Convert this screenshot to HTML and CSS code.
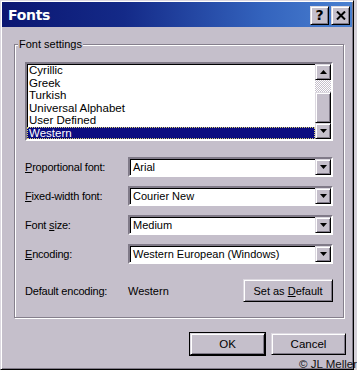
FILE: index.html
```html
<!DOCTYPE html>
<html lang="en">
<head>
  <meta charset="UTF-8" />
  <meta name="viewport" content="width=device-width, initial-scale=1.0"/>
  <title>Fonts</title>
  <link rel="stylesheet" href="styles.css">
</head>
<body>

  <div class="page">
    <div class="window">
      <div class="titlebar">
        <span class="title">Fonts</span>
        <div class="title-buttons">
          <button class="tbtn help">?</button>
          <button class="tbtn">
            <svg width="10" height="9" viewBox="0 0 10 9"><path d="M1 0.5 L9 8.5 M9 0.5 L1 8.5" stroke="#000" stroke-width="2"/></svg>
          </button>
        </div>
      </div>

      <div class="content">
        <div class="group">
          <span class="group-label">Font settings</span>

          <div class="listbox">
            <ul class="items">
              <li>Cyrillic</li>
              <li>Greek</li>
              <li>Turkish</li>
              <li>Universal Alphabet</li>
              <li>User Defined</li>
              <li class="selected">Western</li>
            </ul>
            <div class="scrollbar">
              <div class="sb-btn raised">
                <svg width="7" height="4" viewBox="0 0 7 4"><path d="M3.5 0 L7 4 L0 4 Z" fill="#000"/></svg>
              </div>
              <div class="sb-track"></div>
              <div class="sb-thumb raised"></div>
              <div class="sb-btn raised">
                <svg width="7" height="4" viewBox="0 0 7 4"><path d="M0 0 L7 0 L3.5 4 Z" fill="#000"/></svg>
              </div>
            </div>
          </div>

          <div class="fields">
            <div class="field">
              <span class="label"><u>P</u>roportional font:</span>
              <div class="combo"><span class="combo-text">Arial</span><span class="drop raised"><svg width="7" height="4" viewBox="0 0 7 4"><path d="M0 0 L7 0 L3.5 4 Z" fill="#000"/></svg></span></div>
            </div>
            <div class="field">
              <span class="label"><u>F</u>ixed-width font:</span>
              <div class="combo"><span class="combo-text">Courier New</span><span class="drop raised"><svg width="7" height="4" viewBox="0 0 7 4"><path d="M0 0 L7 0 L3.5 4 Z" fill="#000"/></svg></span></div>
            </div>
            <div class="field">
              <span class="label">Font <u>s</u>ize:</span>
              <div class="combo"><span class="combo-text">Medium</span><span class="drop raised"><svg width="7" height="4" viewBox="0 0 7 4"><path d="M0 0 L7 0 L3.5 4 Z" fill="#000"/></svg></span></div>
            </div>
            <div class="field">
              <span class="label"><u>E</u>ncoding:</span>
              <div class="combo"><span class="combo-text">Western European (Windows)</span><span class="drop raised"><svg width="7" height="4" viewBox="0 0 7 4"><path d="M0 0 L7 0 L3.5 4 Z" fill="#000"/></svg></span></div>
            </div>
          </div>

          <div class="default-row">
            <span class="label">Default encoding:</span>
            <span class="value">Western</span>
            <button class="btn raised set-default">Set as <u>D</u>efault</button>
          </div>
        </div>

        <div class="actions">
          <button class="btn raised default-btn">OK</button>
          <button class="btn raised">Cancel</button>
        </div>
      </div>
    </div>

    <span class="credit">© JL Meller</span>
  </div>

</body>
</html>
```

FILE: styles.css
```css
* { box-sizing: border-box; margin: 0; padding: 0; }

body {
  font-family: 'Liberation Sans', Arial, sans-serif;
  font-size: 11px;
  color: #000;
  background-color: #d6d2da;
}

.page {
  position: relative;
  width: 357px;
  height: 370px;
  overflow: hidden;
}

.window {
  width: 354px;
  height: 370px;
  background-color: #c5bfcb;
  border: 1px solid;
  border-color: #dcd8e0 #000 #000 #dcd8e0;
  box-shadow: inset 1px 1px 0 #fff, inset -1px -1px 0 #807a88;
  padding: 1px;
  display: flex;
  flex-direction: column;
}

/* title bar */
.titlebar {
  height: 25px;
  display: flex;
  align-items: center;
  justify-content: space-between;
  padding: 0 2px 0 6px;
  background: linear-gradient(to right, #0b1672 0%, #142a88 35%, #3464be 75%, #4a80d0 100%);
}

.title {
  font-family: 'DejaVu Sans', Verdana, sans-serif;
  font-weight: bold;
  font-size: 14px;
  color: #fff;
  letter-spacing: -0.3px;
}

.title-buttons {
  display: flex;
  gap: 2px;
  padding-top: 1px;
}

.tbtn {
  width: 19px;
  height: 19px;
  display: flex;
  align-items: center;
  justify-content: center;
  background-color: #c5bfcb;
  border: 1px solid;
  border-color: #dcd8e0 #000 #000 #dcd8e0;
  box-shadow: inset 1px 1px 0 #fff, inset -1px -1px 0 #807a88;
}

.tbtn.help {
  font-family: 'DejaVu Sans', sans-serif;
  font-weight: bold;
  font-size: 14px;
  line-height: 1;
}

/* dialog content */
.content {
  padding: 17px 8px 0 12px;
}

.raised {
  background-color: #c5bfcb;
  border: 1px solid;
  border-color: #dcd8e0 #000 #000 #dcd8e0;
  box-shadow: inset 1px 1px 0 #fff, inset -1px -1px 0 #807a88;
}

.group {
  position: relative;
  width: 330px;
  border: 1px solid #857f8c;
  box-shadow: inset 1px 1px 0 #fff, 1px 1px 0 #fff;
  padding: 17px 10px 15px 10px;
}

.group-label {
  position: absolute;
  top: -7px;
  left: 3px;
  padding: 0 1px;
  background-color: #c5bfcb;
  line-height: 13px;
}

/* list box */
.listbox {
  height: 79px;
  display: flex;
  background-color: #fff;
  border: 2px solid;
  border-color: #807a88 #fff #fff #807a88;
  box-shadow: inset 1px 1px 0 #000;
  margin-bottom: 16px;
  overflow: hidden;
}

.items {
  list-style: none;
  flex: 1;
}

.items li {
  height: 12.5px;
  line-height: 12.5px;
  padding-left: 2px;
  font-size: 11.5px;
}

.items li.selected {
  background-color: #0c0c80;
  color: #fff;
  outline: 1px dotted #d8d070;
  outline-offset: -1px;
}

.scrollbar {
  width: 16px;
  display: flex;
  flex-direction: column;
}

.sb-btn {
  height: 16px;
  display: flex;
  align-items: center;
  justify-content: center;
}

.sb-track {
  height: 12px;
  background: repeating-conic-gradient(#fff 0 25%, #c5bfcb 0 50%) 0 0 / 2px 2px;
}

.sb-thumb {
  flex: 1;
}

/* combo rows */
.fields {
  display: flex;
  flex-direction: column;
  gap: 9px;
}

.field,
.default-row {
  display: flex;
  align-items: center;
}

.label {
  width: 103px;
  font-size: 11px;
  letter-spacing: -0.2px;
}

.combo {
  width: 205px;
  height: 20px;
  display: flex;
  align-items: center;
  background-color: #fff;
  border: 2px solid;
  border-color: #807a88 #fff #fff #807a88;
  box-shadow: inset 1px 1px 0 #000;
  padding-left: 3px;
}

.combo-text {
  flex: 1;
  font-size: 11px;
}

.drop {
  width: 16px;
  height: 16px;
  display: flex;
  align-items: center;
  justify-content: center;
}

.default-row {
  margin-top: 15px;
  height: 23px;
}

.value {
  flex: 1;
}

.btn {
  font-family: 'Liberation Sans', Arial, sans-serif;
  font-size: 11.5px;
  color: #000;
}

.set-default {
  width: 90px;
  height: 23px;
  font-size: 11px;
}

/* bottom buttons */
.actions {
  width: 332px;
  margin-top: 15px;
  display: flex;
  justify-content: flex-end;
  gap: 6px;
}

.actions .btn {
  width: 75px;
  height: 22px;
}

.default-btn {
  outline: 1px solid #000;
  outline-offset: 0;
}

.credit {
  position: absolute;
  right: 0;
  bottom: 0;
  font-size: 11.5px;
  line-height: 12px;
  color: #111;
}
```
